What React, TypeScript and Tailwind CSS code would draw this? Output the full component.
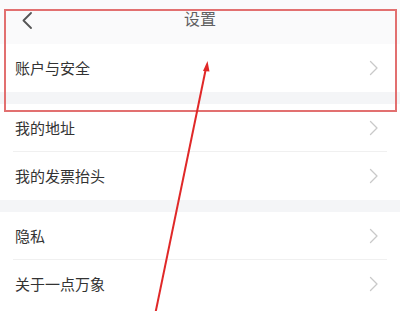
import React from "react";

const Chevron = () => (
  <svg width="10" height="16" viewBox="0 0 10 16" fill="none">
    <path d="M1.5 1.5 L8 8 L1.5 14.5" stroke="#c9c9c9" strokeWidth="1.3" strokeLinecap="round" strokeLinejoin="round" />
  </svg>
);

const Row = ({ label, divider }: { label: string; divider?: boolean }) => (
  <div className="relative flex h-[48px] items-center justify-between bg-white pl-[15px] pr-[21px]">
    <span className="text-[15px] leading-[20px] text-[#333]">{label}</span>
    <Chevron />
    {divider && <div className="absolute bottom-0 left-[13px] right-[13px] h-px bg-[#f0f0f0]" />}
  </div>
);

export default function App() {
  return (
    <div
      className="relative h-[311px] w-[400px] overflow-hidden bg-white"
      style={{ fontFamily: '"Noto Sans CJK SC", "Noto Sans", sans-serif' }}
    >
      <div className="relative flex h-[44px] justify-center bg-[#fafafb] pt-[8px]">
        <svg className="absolute left-[20px] top-[11px]" width="14" height="18" viewBox="0 0 14 18" fill="none">
          <path d="M11 2 L3.5 9.5 L11 17" stroke="#555" strokeWidth="1.8" strokeLinecap="round" strokeLinejoin="round" />
        </svg>
        <span className="text-[16px] leading-[20px] text-[#606060]">设置</span>
      </div>
      <Row label="账户与安全" />
      <div className="h-[12px] bg-[#f4f5f7]" />
      <Row label="我的地址" divider />
      <Row label="我的发票抬头" />
      <div className="h-[12px] bg-[#f4f5f7]" />
      <Row label="隐私" divider />
      <Row label="关于一点万象" />

      <div className="pointer-events-none absolute left-[4px] top-[9px] h-[103px] w-[393px] border-2 border-[#e27070]" />
      <svg className="pointer-events-none absolute left-0 top-0" width="400" height="311" viewBox="0 0 400 311">
        <line x1="155" y1="315" x2="206" y2="68" stroke="#e02828" strokeWidth="2" />
        <path d="M207.5 61 L203 71 L209.5 71.5 Z" fill="#e02828" />
      </svg>
    </div>
  );
}
